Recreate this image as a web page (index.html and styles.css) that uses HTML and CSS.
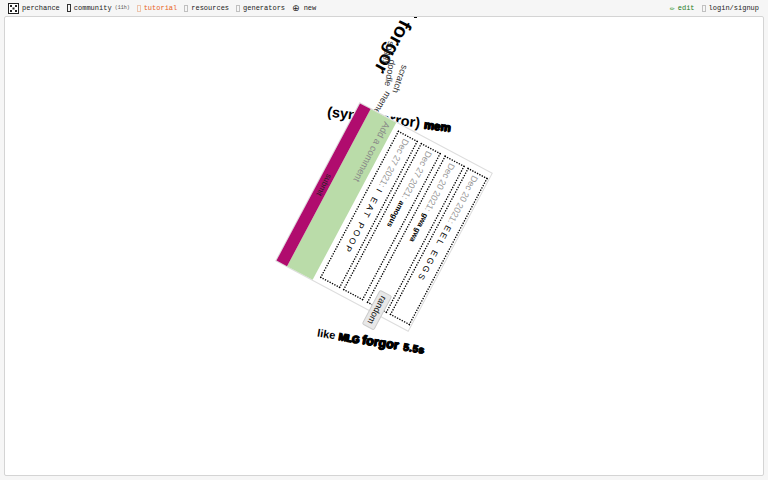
FILE: index.html
```html
<!DOCTYPE html>
<html lang="en">
<head>
    <meta charset="UTF-8">
    <title>perchance</title>
    <link rel="stylesheet" href="styles.css">
</head>
<body>
    <nav class="topbar">
        <a class="nav-item">
            <svg class="dice" viewBox="0 0 11 11" width="11" height="11">
                <rect x="0.5" y="0.5" width="10" height="10" fill="#fff" stroke="#222"/>
                <rect x="2" y="2" width="2" height="2" fill="#222"/>
                <rect x="7" y="2" width="2" height="2" fill="#222"/>
                <rect x="4.5" y="4.5" width="2" height="2" fill="#222"/>
                <rect x="2" y="7" width="2" height="2" fill="#222"/>
                <rect x="7" y="7" width="2" height="2" fill="#222"/>
            </svg>
            <span>perchance</span>
        </a>
        <a class="nav-item"><span class="tofu tofu-dark"></span><span>community</span><small>(11h)</small></a>
        <a class="nav-item nav-orange"><span class="tofu tofu-orange"></span><span>tutorial</span></a>
        <a class="nav-item"><span class="tofu"></span><span>resources</span></a>
        <a class="nav-item"><span class="tofu"></span><span>generators</span></a>
        <a class="nav-item"><span class="globe">⊕</span><span>new</span></a>
        <a class="nav-item nav-green nav-right"><span class="pencil">✏</span><span>edit</span></a>
        <a class="nav-item"><span class="tofu"></span><span>login/signup</span></a>
    </nav>

    <main class="frame">
        <div class="word heading">(syntax error) <span class="blob blob-mem">mem</span></div>
        <div class="word forgor">forgor</div>
        <div class="speck"></div>
        <div class="word tag tag-soggy">soggy</div>
        <div class="word tag tag-doodle">doodle</div>
        <div class="word tag tag-scratch">scratch</div>
        <div class="word tag tag-meme">meme</div>

        <section class="card">
            <ul class="comments">
                <li class="comment"><span class="stamp">Dec 20 2021:</span> <span class="spaced">EEL EGGS</span></li>
                <li class="comment"><span class="stamp">Dec 20 2021:</span> <span class="small-msg">gwa gwa</span></li>
                <li class="comment"><span class="stamp">Dec 27 2021:</span> <span class="small-msg">amogus</span></li>
                <li class="comment"><span class="stamp">Dec 27 2021:</span> <span class="spaced">I EAT POOP</span></li>
            </ul>
            <div class="comment-input">Add a comment</div>
            <div class="submit">submit</div>
            <button class="random">random</button>
        </section>

        <div class="word caption">like <span class="blob blob-mlg">MLG</span> <span class="blob blob-forgor">forgor</span> <span class="blob blob-small">5.5s</span></div>
    </main>
</body>
</html>
```

FILE: styles.css
```css
html, body {
    height: 100%;
}

body {
    margin: 0;
    padding: 0 4px 4px;
    box-sizing: border-box;
    display: flex;
    flex-direction: column;
    background-color: #f6f6f6;
    font-family: "Liberation Sans", sans-serif;
    overflow: hidden;
}

/* top bar */
.topbar {
    display: flex;
    align-items: center;
    gap: 7px;
    height: 16px;
    padding: 0 5px 0 4px;
    font-family: "Liberation Mono", monospace;
    font-size: 7px;
    color: #222;
}

.nav-item {
    display: flex;
    align-items: center;
    gap: 3px;
    white-space: nowrap;
}

.nav-item small {
    font-size: 5px;
    color: #555;
}

.nav-orange {
    color: #e8641e;
}

.nav-green {
    color: #1c7a1c;
}

.nav-right {
    margin-left: auto;
}

.tofu {
    display: inline-block;
    width: 2px;
    height: 5px;
    border: 1px solid #aaa;
    opacity: 0.7;
}

.tofu-dark {
    border-color: #333;
    height: 6px;
    opacity: 1;
}

.tofu-orange {
    border-color: #eab08f;
}

.globe {
    font-family: "DejaVu Sans", sans-serif;
    font-size: 9px;
    line-height: 9px;
    margin-right: 1px;
}

.pencil {
    font-family: "DejaVu Sans", sans-serif;
    font-size: 6px;
    color: #3a9a3a;
}

/* the framed page with everything spinning in it */
.frame {
    position: relative;
    flex: 1;
    background-color: #fff;
    border: 1px solid #d4d4d4;
    border-radius: 2px;
    overflow: hidden;
}

.word {
    position: absolute;
    white-space: nowrap;
    transform: translate(-50%, -50%) rotate(var(--turn));
    color: #000;
}

.heading {
    left: 384px;
    top: 102px;
    --turn: 7deg;
    font-size: 14.5px;
    font-weight: bold;
}

.blob {
    font-weight: bold;
    -webkit-text-stroke: 0.8px #000;
    text-shadow: 1px 0 0 #000, 0 1px 0 #000;
}

.blob-mem {
    font-size: 11.5px;
}

.forgor {
    left: 388px;
    top: 30px;
    --turn: 118deg;
    font-size: 19.5px;
    font-weight: bold;
}

.speck {
    position: absolute;
    left: 409px;
    top: 0;
    width: 3px;
    height: 1px;
    background-color: #000;
}

.tag {
    font-size: 9px;
    color: #333;
}

.tag-soggy {
    left: 384px;
    top: 36px;
    --turn: 100deg;
}

.tag-doodle {
    left: 385px;
    top: 56px;
    --turn: 100deg;
}

.tag-scratch {
    left: 395px;
    top: 62px;
    --turn: 110deg;
}

.tag-meme {
    left: 377px;
    top: 86px;
    --turn: 122deg;
}

.caption {
    left: 366px;
    top: 324px;
    --turn: 9deg;
    font-size: 11px;
    font-weight: bold;
}

.blob-mlg {
    font-size: 10px;
    letter-spacing: -0.5px;
}

.blob-forgor {
    font-size: 12.5px;
}

.blob-small {
    font-size: 10px;
    letter-spacing: 0.5px;
    margin-left: 2px;
}

/* the rotated comment box */
.card {
    position: absolute;
    left: 379px;
    top: 200px;
    width: 180px;
    height: 151px;
    box-sizing: border-box;
    display: flex;
    flex-direction: column;
    background-color: #fff;
    border: 1px solid #ddd;
    transform: translate(-50%, -50%) rotate(118deg);
}

.comments {
    list-style: none;
    margin: 0;
    padding: 1px 6px 0;
    flex: 1;
    display: flex;
    flex-direction: column;
    gap: 3px;
}

.comment {
    position: relative;
    flex: 1;
    display: flex;
    align-items: center;
    gap: 3px;
    padding: 0 4px;
    white-space: nowrap;
    font-size: 8px;
}

/* borders can't be 1.33px wide, so draw a 1px one and scale it up */
.comment::before {
    content: "";
    position: absolute;
    left: 0;
    top: 0;
    width: 75%;
    height: 75%;
    box-sizing: border-box;
    border: 1px dotted #000;
    transform: scale(1.3333);
    transform-origin: 0 0;
}

.stamp {
    color: #999;
    font-size: 9px;
}

.spaced {
    font-size: 8.5px;
    letter-spacing: 2.5px;
}

.small-msg {
    font-size: 7.5px;
    font-weight: bold;
}

.comment-input {
    flex: 0 0 29px;
    margin-top: 5px;
    padding: 2px 4px;
    box-sizing: border-box;
    background-color: #badca9;
    color: #888;
    font-size: 9.5px;
}

.submit {
    flex: 0 0 12px;
    background-color: #b00c6e;
    color: #222;
    font-size: 8px;
    line-height: 12px;
    text-align: center;
}

.random {
    position: absolute;
    left: 155px;
    top: 30px;
    width: 39px;
    height: 14px;
    padding: 0;
    background-color: #e8e8e8;
    border: 1px solid #ccc;
    border-radius: 2px;
    color: #111;
    font-family: "Liberation Sans", sans-serif;
    font-size: 9px;
}
```
